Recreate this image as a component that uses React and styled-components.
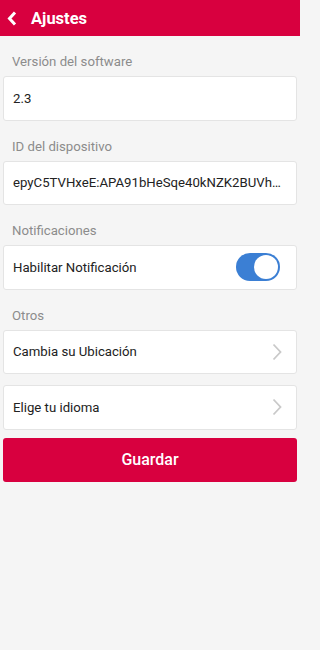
import React, { useState } from 'react';
import styled, { createGlobalStyle } from 'styled-components';

const GlobalStyle = createGlobalStyle`
  html, body {
    margin: 0;
    padding: 0;
    background: #f5f5f5;
    font-family: Roboto, "Liberation Sans", sans-serif;
  }
`;

const Page = styled.div`
  width: 300px;
  min-height: 650px;
  background: #f5f5f5;
`;

const Header = styled.header`
  height: 36px;
  background: #d8003f;
  display: flex;
  align-items: center;
  padding-left: 7px;
  box-sizing: border-box;

  h1 {
    margin: 0 0 0 14px;
    color: white;
    font-size: 16.5px;
    font-weight: 700;
  }
`;

const BackBtn = styled.button`
  background: none;
  border: none;
  padding: 0;
  display: flex;
  align-items: center;
  cursor: pointer;
`;

const Content = styled.div`
  padding: 0 3px;
`;

const SectionTitle = styled.div`
  color: #8c8c8c;
  font-size: 13.2px;
  line-height: 16px;
  padding: 18px 9px 0;
  height: 40px;
  box-sizing: border-box;
`;

const Card = styled.div`
  background: white;
  border: 1px solid #e4e4e4;
  border-radius: 3px;
  height: 44.5px;
  box-sizing: border-box;
  display: flex;
  align-items: center;
  justify-content: space-between;
  padding: 0 ${(p) => (p.$tight ? '8px' : '14px')} 0 9px;
  margin-bottom: ${(p) => (p.$gap ? '11px' : '0')};
  color: #222;
  font-size: 13.2px;
  cursor: ${(p) => (p.$link ? 'pointer' : 'default')};

  span {
    min-width: 0;
    white-space: nowrap;
    overflow: hidden;
    text-overflow: ellipsis;
  }
`;

const Switch = styled.button`
  width: 44px;
  height: 28px;
  border-radius: 14px;
  border: none;
  padding: 2px;
  margin-right: 2px;
  background: ${(p) => (p.$on ? '#3b7fd4' : '#c7c7c7')};
  display: flex;
  justify-content: ${(p) => (p.$on ? 'flex-end' : 'flex-start')};
  cursor: pointer;
  flex-shrink: 0;

  &::after {
    content: '';
    width: 24px;
    height: 24px;
    border-radius: 50%;
    background: white;
  }
`;

const SaveBtn = styled.button`
  display: block;
  width: 100%;
  height: 43.5px;
  margin-top: 8.5px;
  background: #d8003f;
  color: white;
  border: none;
  border-radius: 3px;
  font-family: Roboto, "Liberation Sans", sans-serif;
  font-size: 16px;
  font-weight: 500;
  cursor: pointer;
`;

const Chevron = () => (
  <svg width="10" height="18" viewBox="0 0 10 18">
    <path d="M1.5 1.5 L8.5 9 L1.5 16.5" fill="none" stroke="#c9c9c9" strokeWidth="1.8" />
  </svg>
);

function App() {
  const [notif, setNotif] = useState(true);

  return (
    <Page>
      <GlobalStyle />
      <Header>
        <BackBtn aria-label="Volver">
          <svg width="10" height="15" viewBox="0 0 10 15">
            <path d="M8 1.5 L2.5 7.5 L8 13.5" fill="none" stroke="white" strokeWidth="3" />
          </svg>
        </BackBtn>
        <h1>Ajustes</h1>
      </Header>
      <Content>
        <SectionTitle>Versión del software</SectionTitle>
        <Card><span>2.3</span></Card>

        <SectionTitle>ID del dispositivo</SectionTitle>
        <Card $tight><span>epyC5TVHxeE:APA91bHeSqe40kNZK2BUVh…</span></Card>

        <SectionTitle>Notificaciones</SectionTitle>
        <Card>
          <span>Habilitar Notificación</span>
          <Switch $on={notif} onClick={() => setNotif(!notif)} aria-label="Notificaciones" />
        </Card>

        <SectionTitle>Otros</SectionTitle>
        <Card $gap $link>
          <span>Cambia su Ubicación</span>
          <Chevron />
        </Card>
        <Card $link>
          <span>Elige tu idioma</span>
          <Chevron />
        </Card>

        <SaveBtn>Guardar</SaveBtn>
      </Content>
    </Page>
  );
}

export default App;
